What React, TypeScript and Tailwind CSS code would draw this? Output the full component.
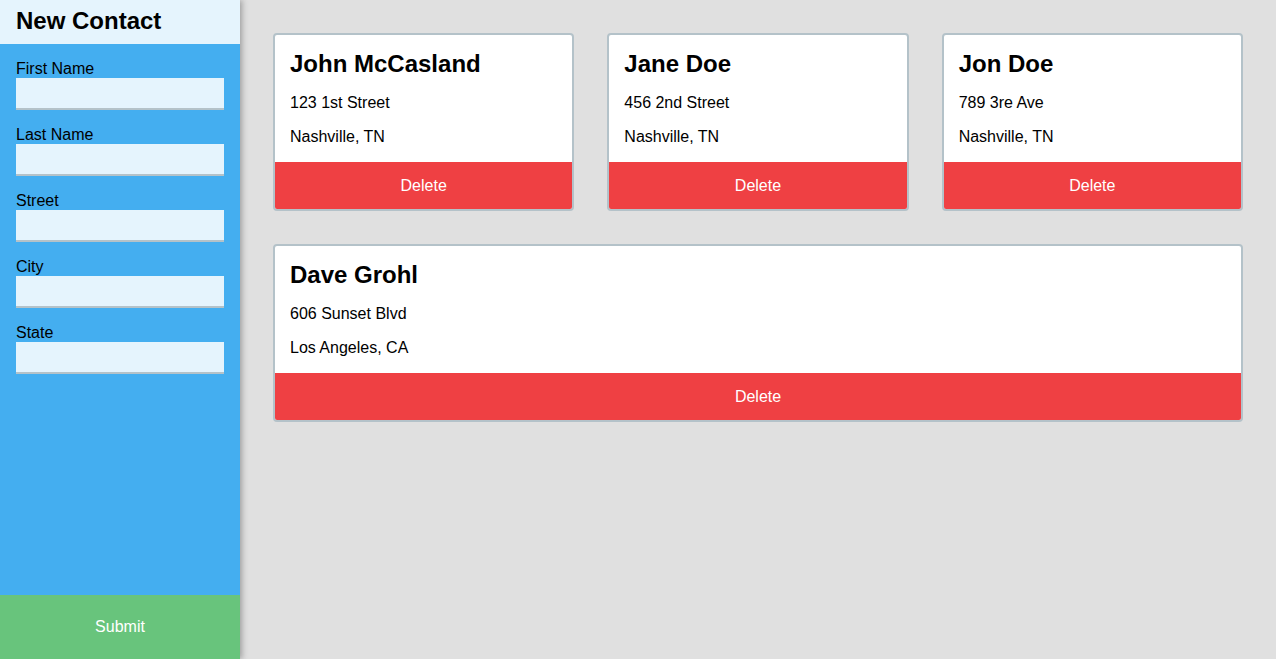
const contacts = [
  { name: "John McCasland", street: "123 1st Street", city: "Nashville, TN" },
  { name: "Jane Doe", street: "456 2nd Street", city: "Nashville, TN" },
  { name: "Jon Doe", street: "789 3re Ave", city: "Nashville, TN" },
  { name: "Dave Grohl", street: "606 Sunset Blvd", city: "Los Angeles, CA" },
];

const fields = ["First Name", "Last Name", "Street", "City", "State"];

function ContactCard({ name, street, city, wide }: { name: string; street: string; city: string; wide?: boolean }) {
  return (
    <div className={`bg-white border-2 border-[#b4c2c9] rounded-[4px] overflow-hidden flex flex-col ${wide ? "col-span-3" : ""}`}>
      <div className="pt-[15px] px-[15px] pb-[16px]">
        <h2 className="text-[24px] leading-[28px] font-bold text-black">{name}</h2>
        <p className="mt-[16px] text-[16px] leading-[18px] text-black">{street}</p>
        <p className="mt-[16px] text-[16px] leading-[18px] text-black">{city}</p>
      </div>
      <button className="h-[47px] w-full bg-[#ef4043] text-white text-[16px]">Delete</button>
    </div>
  );
}

export default function App() {
  return (
    <div className="flex h-screen bg-[#e0e0e0]" style={{ fontFamily: '"Liberation Sans", Arial, sans-serif' }}>
      <aside className="relative z-10 w-[240px] shrink-0 flex flex-col bg-[#44aef0] shadow-[2px_0_6px_rgba(0,0,0,0.3)]">
        <div className="h-[44px] bg-[#e5f4fd] px-4 flex items-center">
          <h1 className="text-[24px] font-bold text-black leading-none -mt-[2px]">New Contact</h1>
        </div>
        <form className="flex-1 px-4 pt-4">
          {fields.map((f) => (
            <label key={f} className="block mb-4">
              <span className="block text-[16px] leading-[18px] text-black">{f}</span>
              <input className="block w-full h-[32px] bg-[#e5f4fd] border-b-2 border-[#b4c2c9] outline-none px-2" />
            </label>
          ))}
        </form>
        <button className="h-[64px] w-full bg-[#68c47c] text-white text-[16px]">Submit</button>
      </aside>
      <main className="flex-1 p-[33px]">
        <div className="grid grid-cols-3 gap-[33px]">
          {contacts.map((c, i) => (
            <ContactCard key={c.name} {...c} wide={i === 3} />
          ))}
        </div>
      </main>
    </div>
  );
}
